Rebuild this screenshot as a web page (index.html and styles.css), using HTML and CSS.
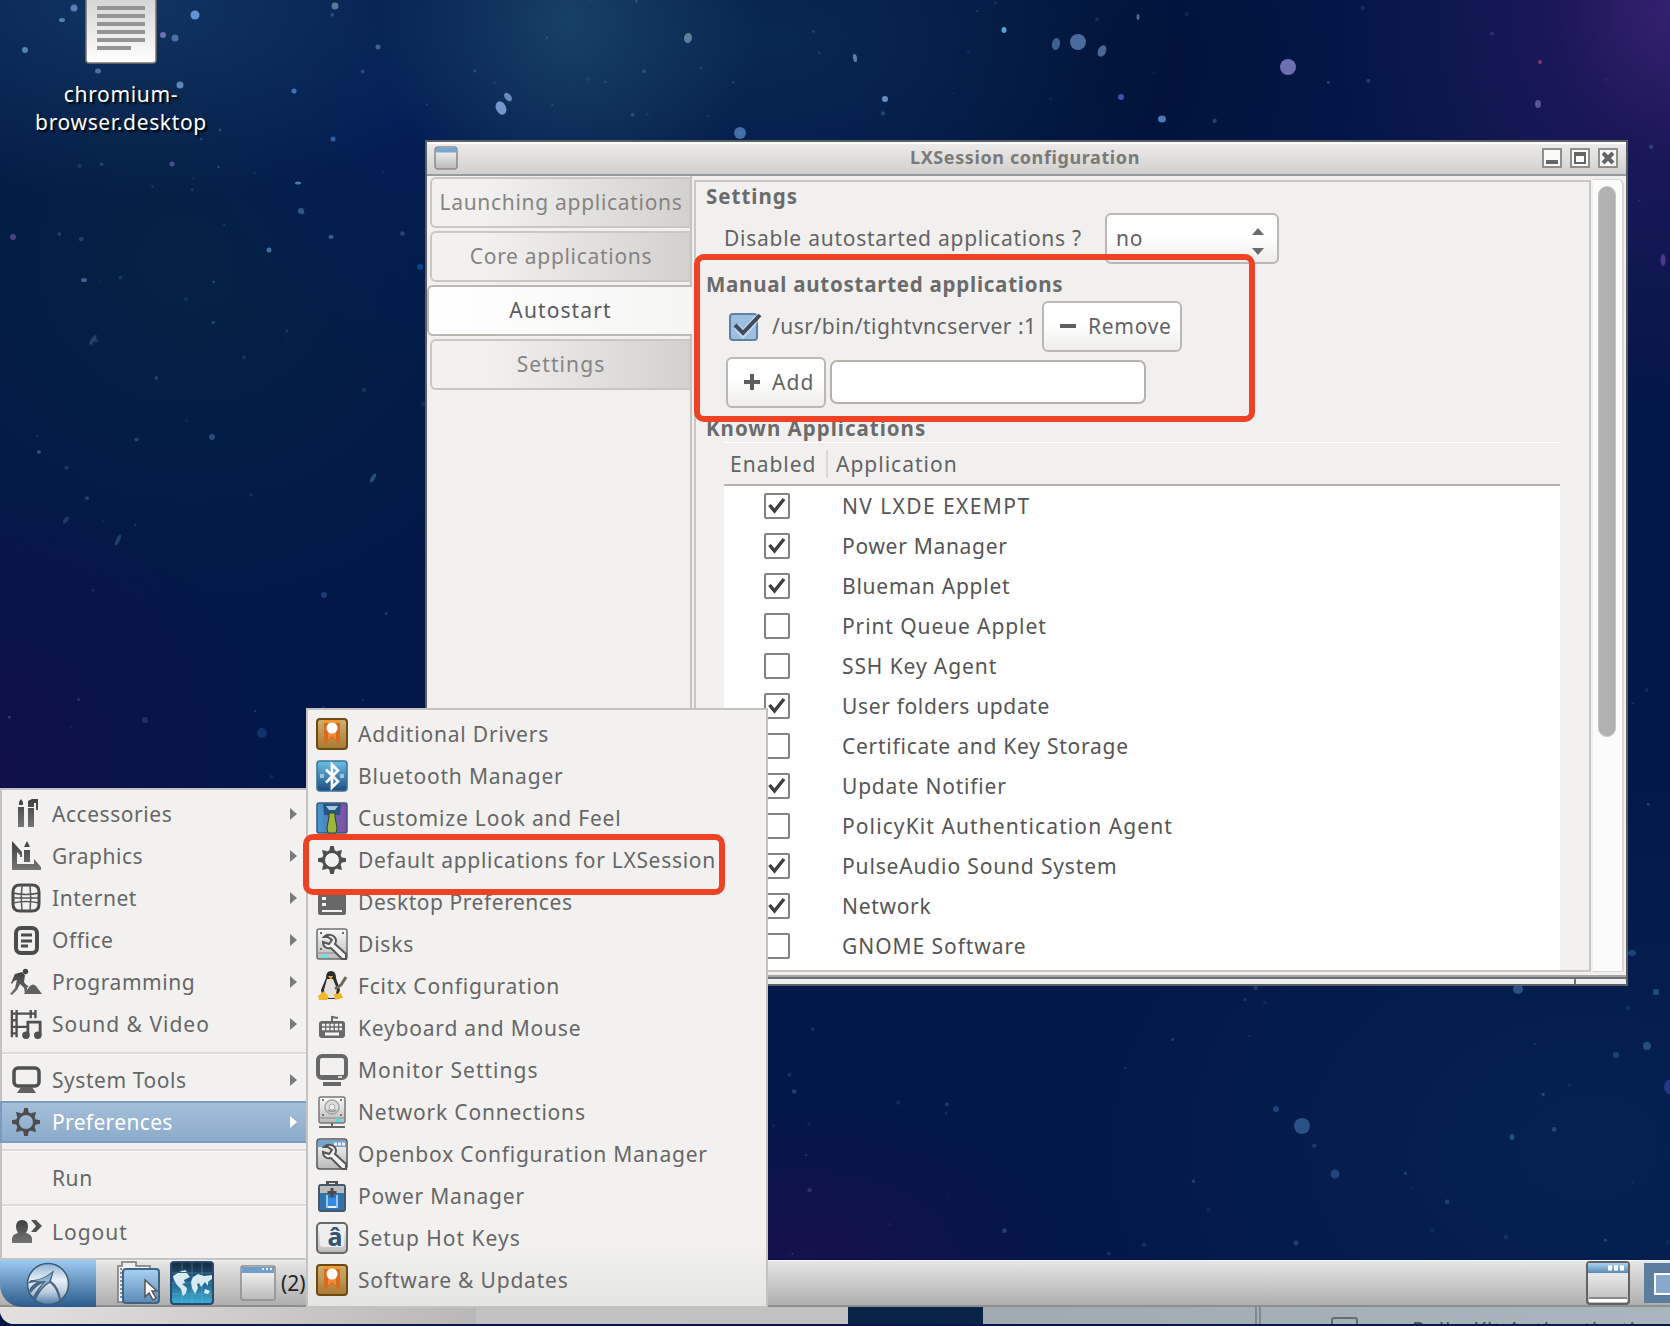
FILE: index.html
```html
<!DOCTYPE html>
<html lang="en">
<head>
<meta charset="utf-8">
<title>LXDE desktop</title>
<link rel="stylesheet" href="styles.css">
</head>
<body>
<svg width="0" height="0" class="defs" aria-hidden="true">
  <defs>
    <linearGradient id="dk" x1="0" y1="0" x2="0" y2="1"><stop offset="0" stop-color="#3f3f3f"/><stop offset="1" stop-color="#757575"/></linearGradient>
    <linearGradient id="gold" x1="0" y1="0" x2="0" y2="1"><stop offset="0" stop-color="#d0b070"/><stop offset="1" stop-color="#a97a33"/></linearGradient>
    <linearGradient id="bt" x1="0" y1="0" x2="0" y2="1"><stop offset="0" stop-color="#6cc0e6"/><stop offset="1" stop-color="#1c4d80"/></linearGradient>
    <linearGradient id="look" x1="0" y1="0" x2="1" y2="0"><stop offset="0" stop-color="#3fa0d4"/><stop offset=".5" stop-color="#5d6fae"/><stop offset="1" stop-color="#8b4aa6"/></linearGradient>
    <linearGradient id="silver" x1="0" y1="0" x2="0" y2="1"><stop offset="0" stop-color="#fbfbfb"/><stop offset="1" stop-color="#b9b9b9"/></linearGradient>
    <linearGradient id="blue" x1="0" y1="0" x2="0" y2="1"><stop offset="0" stop-color="#a9d3f2"/><stop offset="1" stop-color="#5b89b5"/></linearGradient>
    <linearGradient id="paper" x1="0" y1="0" x2="0" y2="1"><stop offset="0" stop-color="#cfcfcf"/><stop offset="1" stop-color="#ffffff"/></linearGradient>
    <linearGradient id="globe" x1="0" y1="0" x2="0" y2="1"><stop offset="0" stop-color="#16263c"/><stop offset=".5" stop-color="#23658e"/><stop offset="1" stop-color="#3fb0d6"/></linearGradient>
    <linearGradient id="orb" x1="0" y1="0" x2="0" y2="1"><stop offset="0" stop-color="#8fb2d4"/><stop offset=".4" stop-color="#e8f0f7"/><stop offset=".7" stop-color="#bccddd"/><stop offset="1" stop-color="#4f7ba8"/></linearGradient>
    <symbol id="gear" viewBox="0 0 32 32"><circle cx="16" cy="16" r="8.500" fill="none" stroke="#4d4d4d" stroke-width="3"/><path d="M14.200 2h3.600l1 5h-5.600zM14.200 30h3.600l1-5h-5.600zM2 14.200v3.600l5 1v-5.600zM30 14.200v3.600l-5 1v-5.600zM6 6l4.500 1 1 2-2.500 2.500-2-1zM26 6l-4.500 1-1 2 2.500 2.500 2-1zM6 26l4.500-1 1-2L9 20.500l-2 1zM26 26l-4.500-1-1-2 2.500-2.500 2 1z" fill="#4d4d4d"/></symbol>
    <symbol id="drivers" viewBox="0 0 32 32"><rect x="1" y="1" width="30" height="30" rx="3" fill="url(#gold)" stroke="#6d4a12" stroke-width="2"/><path d="M8 2h16v24l-8-6-8 6z" fill="#dc6a1e"/><path d="M12 2v20l4-4 4 4V2z" fill="#ee8a38"/><path d="M8 2h16v3H8z" fill="#f09a30"/><circle cx="16" cy="10" r="5.5" fill="#fff"/></symbol>
    <symbol id="wrench" viewBox="0 0 32 32"><path d="M8 9c4-4 11-2 12 3 0 2 0 3-1 4l11 10v5h-4L15 20c-4 1-8-1-8-6l6 2 3-4-4-3z" fill="#f2f2f2" stroke="#555" stroke-width="2"/></symbol>
  </defs>
</svg>

<main class="desktop">
  <svg class="sky" width="1670" height="1326" viewBox="0 0 1670 1326" id="sky" aria-hidden="true"></svg>

  <figure class="launcher">
    <svg width="76" height="66" viewBox="0 0 76 66"><rect x="3" y="-10" width="70" height="73" rx="3" fill="url(#paper)" stroke="#77736e" stroke-width="1.5"/><path d="M14 8h48M14 16h48M14 24h48M14 32h48M14 40h48M14 48h34" stroke="#949494" stroke-width="4"/></svg>
    <figcaption>chromium-<br>browser.desktop</figcaption>
  </figure>

  <section class="window">
    <header class="titlebar">
      <svg class="appicon" width="24" height="24" viewBox="0 0 24 24"><rect x="1" y="1" width="22" height="22" rx="3" fill="url(#silver)" stroke="#8b8b8b" stroke-width="1.5"/><rect x="1.5" y="1.5" width="21" height="5" fill="#7aa6cf"/></svg>
      <h1>LXSession configuration</h1>
      <div class="controls">
        <svg viewBox="0 0 20 20"><rect x="1" y="1" width="18" height="18" fill="#fafafa" stroke="#8f8f8d" stroke-width="2"/><path d="M4 14h12" stroke="#666" stroke-width="4"/></svg>
        <svg viewBox="0 0 20 20"><rect x="1" y="1" width="18" height="18" fill="#fafafa" stroke="#8f8f8d" stroke-width="2"/><path d="M5 6h10v9H5z" fill="none" stroke="#666" stroke-width="2"/><path d="M4 6h12" stroke="#666" stroke-width="4"/></svg>
        <svg viewBox="0 0 20 20"><rect x="1" y="1" width="18" height="18" fill="#fafafa" stroke="#8f8f8d" stroke-width="2"/><path d="M5 5l10 10M15 5L5 15" stroke="#666" stroke-width="4"/><path d="M7 7h6v6H7z" fill="#666"/></svg>
      </div>
    </header>
    <div class="body">
      <nav class="tabs">
        <div class="tab">Launching applications</div>
        <div class="tab">Core applications</div>
        <div class="tab active">Autostart</div>
        <div class="tab short">Settings</div>
      </nav>
      <div class="panel">
        <h2 class="short">Settings</h2>
        <div class="row disable"><span class="q">Disable autostarted applications ?</span><div class="select"><span>no</span><svg width="12" height="27" viewBox="0 0 12 27"><path d="M0 7l6-7 6 7zM0 20h12l-6 7z" fill="#6b6b6b"/></svg></div></div>
        <h2 class="h-man">Manual autostarted applications</h2>
        <div class="row manual">
          <svg width="33" height="30" viewBox="0 0 33 30"><rect x="1" y="3" width="27" height="26" rx="3" fill="#9dbfdf" stroke="#5c82a8" stroke-width="2"/><path d="M7 15l7 8L31 4" fill="none" stroke="#fff" stroke-opacity=".4" stroke-width="7"/><path d="M6 14l8 8L31 4" fill="none" stroke="#3e4b5b" stroke-width="4"/></svg>
          <span class="path">/usr/bin/tightvncserver :1</span>
          <div class="button rem"><svg width="18" height="18" viewBox="0 0 18 18"><path d="M1 9h16" stroke="#5e5e5e" stroke-width="4"/></svg><span>Remove</span></div>
        </div>
        <div class="row addrow">
          <div class="button add"><svg width="18" height="18" viewBox="0 0 18 18"><path d="M1 9h16M9 1v16" stroke="#5e5e5e" stroke-width="4"/></svg><span>Add</span></div>
          <div class="entry"></div>
        </div>
        <h2 class="h-known short">Known Applications</h2>
        <div class="table">
          <div class="thead"><span class="c1">Enabled</span><span class="c2">Application</span></div>
          <div class="tbody" id="apps"></div>
        </div>
      </div>
      <div class="scroll"><div class="thumb"></div></div>
    </div>
    <footer class="grip"><i></i></footer>
  </section>

  <footer class="taskbar">
    <div class="start"><svg width="44" height="44" viewBox="0 0 44 44"><circle cx="22" cy="22" r="20.5" fill="url(#orb)" stroke="#39597c" stroke-width="1.5"/><path d="M5 18c7 0 14-2 23-10l-3 11c6 4 9 11 10 19h-2c-2-9-5-14-9-17-5 2-10 8-14 17l-3-3c3-6 6-10 10-14-5 2-9 6-12 10l-2-3c2-4 5-6 8-8-4 0-7 1-10 2z" fill="#49657f"/><path d="M9 18c6 0 12-3 17-7l-3 9c-5 2-9 7-12 13 3-7 6-11 9-14-4 0-8 1-11-1z" fill="#8fb1d0"/></svg></div>
    <svg class="files" width="44" height="44" viewBox="0 0 44 44"><path d="M2 5h4V1h14v4h14v36H2z" fill="#f0f0f0" stroke="#777" stroke-width="1.5"/><path d="M5 7v32" stroke="#888" stroke-width="2" stroke-dasharray="2 2"/><rect x="7" y="8" width="36" height="34" rx="3" fill="url(#blue)" stroke="#3d6389" stroke-width="2"/><path d="M29 19v17l4-4 4 7 3-2-4-7h5z" fill="#fff" stroke="#555" stroke-width="1.5"/></svg>
    <svg class="web" width="44" height="44" viewBox="0 0 44 44"><rect x="1" y="1" width="42" height="42" rx="3" fill="url(#globe)" stroke="#274a73" stroke-width="2"/><path d="M12 2v40M22 2v40M32 2v40M2 12h40M2 22h40M2 33h40" stroke="#74bcd8" stroke-opacity=".4"/><path d="M3 15l5-3 9 0 3 4-6 3 1 3-3 1 5 4-1 5-3 3-2-7-4-4-3-5zM23 16l5-3 6 2 8-1 0 4-4 3v4l-3-4-4 5-2-4-2 1 1 4-3 6-3-6-1-6zM35 28l5 2-2 3-4-1zM9 11l6-2 2 2z" fill="#d6ebf2"/></svg>
    <svg class="win1" width="36" height="36" viewBox="0 0 36 36"><rect x="1" y="1" width="34" height="34" rx="2" fill="url(#silver)" stroke="#8d8d8d" stroke-width="1.5"/><rect x="2" y="2" width="32" height="6" fill="#6f9ecc"/><path d="M22 4h11" stroke="#eef" stroke-width="2" stroke-dasharray="2 2"/></svg>
    <span class="count">(2)</span>
    <svg class="win2" width="44" height="44" viewBox="0 0 44 44"><rect x="1" y="1" width="42" height="42" rx="3" fill="url(#silver)" stroke="#626262" stroke-width="2"/><rect x="2" y="2" width="40" height="10" fill="url(#blue)"/><path d="M22 7h17" stroke="#fff" stroke-width="5" stroke-dasharray="4 2"/><path d="M3 37h38" stroke="#888" stroke-width="2"/><path d="M3 39.500h38" stroke="#fff" stroke-width="3"/></svg>
    <div class="pager"><i></i></div>
  </footer>
  <div class="under"><div class="u1"></div><div class="u2"></div><div class="u3"></div><div class="u4"><i class="bar"></i><i class="box"></i><span>PolicyKit Authentication Agent</span></div></div>

  <nav class="menu main">
    <div class="item arr"><svg class="ic" viewBox="0 0 32 32"><path d="M8 9h6v20H8zM9 4l2-3 2 3v3H9zM18 10h6v19h-6zM18 3l4-2h6v11h-2V5h-2v4h-6z" fill="url(#dk)"/></svg><span>Accessories</span></div>
    <div class="item arr"><svg class="ic" viewBox="0 0 32 32"><path fill-rule="evenodd" d="M2 1l10 11v5h-2v-2l-3-3v12h17v-5l7 8v3H2zM14 10h6v12h-6zM14 7l3-6 3 6z" fill="url(#dk)"/></svg><span>Graphics</span></div>
    <div class="item arr"><svg class="ic" viewBox="0 0 32 32"><path d="M10 3h12q7 0 7 7v12q0 7-7 7H10q-7 0-7-7V10q0-7 7-7z" fill="none" stroke="#4c4c4c" stroke-width="3"/><path d="M12 3q-1.500 13 0 26M20 3q1.500 13 0 26M3 11q13 3 26 0M3 21q13-3 26 0M3 16h26" fill="none" stroke="#555" stroke-width="1.500"/></svg><span>Internet</span></div>
    <div class="item arr"><svg class="ic" viewBox="0 0 32 32"><rect x="6" y="4" width="21" height="25" rx="5" fill="none" stroke="#4c4c4c" stroke-width="4"/><path d="M11 11h11M11 17h11M11 22h7" stroke="#4c4c4c" stroke-width="3"/></svg><span>Office</span></div>
    <div class="item arr"><svg class="ic" viewBox="0 0 32 32"><circle cx="15.500" cy="5.500" r="2.700" fill="#444"/><path d="M5 8l7-2 3 3-1 7 3 5v7h-2l-1-6-4-4-3 6-5 5-2-1 5-6 2-8-3 1-2 3-1-1 3-7z" fill="url(#dk)"/><path d="M7 12l11 9" stroke="#555" stroke-width="1.500"/><path d="M14 28l6-8q3-3 6 0l6 8z" fill="#606060"/></svg><span>Programming</span></div>
    <div class="item arr av"><svg class="ic" viewBox="0 0 34 32"><path d="M2 1v29M7 1v29M2 5h25M2 12h6M2 19h16M2 26h6M22 1v9M27 1v9" fill="none" stroke="#505050" stroke-width="2.5"/><path d="M19 28V14h13v14" fill="none" stroke="#505050" stroke-width="3"/><circle cx="17" cy="28" r="4" fill="#505050"/><circle cx="29.5" cy="28" r="4" fill="#505050"/></svg><span>Sound &amp; Video</span></div>
    <hr>
    <div class="item arr"><svg class="ic" viewBox="0 0 32 32"><rect x="4" y="4" width="25" height="18" rx="4" fill="none" stroke="#505050" stroke-width="3.500"/><path d="M11 23h11l4 6H7z" fill="#606060"/></svg><span>System Tools</span></div>
    <div class="item arr sel"><svg class="ic"><use href="#gear"/></svg><span>Preferences</span></div>
    <hr>
    <div class="item run"><i class="ic"></i><span>Run</span></div>
    <hr>
    <div class="item logout"><svg class="ic" viewBox="0 0 32 32"><path d="M2 27v-5q1-4 6-5-2-3-2-6 0-7 6-7t6 7q0 3-2 6 5 1 6 5v5z" fill="url(#dk)"/><path d="M21 4h5l6 6-6 6h-5l5-6z" fill="#505050"/></svg><span>Logout</span></div>
  </nav>

  <nav class="menu sub">
    <div class="item"><svg class="ic"><use href="#drivers"/></svg><span>Additional Drivers</span></div>
    <div class="item"><svg class="ic" viewBox="0 0 32 32"><rect x="1" y="1" width="30" height="30" rx="3" fill="url(#bt)" stroke="#3a7099" stroke-width="1.5"/><path d="M10 9.500l12 12-6 6V4.500l6 6-12 12" fill="none" stroke="#fff" stroke-width="2.700"/><path d="M4 14h4v4H4zM24 14h4v4h-4z" fill="#9cc6df"/></svg><span>Bluetooth Manager</span></div>
    <div class="item"><svg class="ic" viewBox="0 0 32 32"><rect x="1" y="1" width="30" height="30" rx="2" fill="url(#look)" stroke="#37587f" stroke-width="1.5"/><path d="M7 2h18l-1 11h-4l-4-3-4 3H8z" fill="#285684"/><path d="M10 4h12l-3 4h-6z" fill="#a7cae0"/><path d="M13 11h6v4l2 11-1 5h-8l-1-5 2-11z" fill="#9cb83a" stroke="#2b4520"/></svg><span>Customize Look and Feel</span></div>
    <div class="item lx"><svg class="ic"><use href="#gear"/></svg><span>Default applications for LXSession</span></div>
    <div class="item dp"><svg class="ic" viewBox="0 0 32 32"><rect x="2" y="3" width="28" height="26" rx="2" fill="#686868"/><path d="M6 11h4v3H6zM6 17h4v3H6zM6 24h20v2H6z" fill="#f2f2f2"/></svg><span>Desktop Preferences</span></div>
    <div class="item"><svg class="ic" viewBox="0 0 32 32"><rect x="1" y="1" width="30" height="30" rx="2" fill="url(#silver)" stroke="#707070" stroke-width="1.5"/><path d="M2 25h28" stroke="#888"/><use href="#wrench"/><path d="M6 27h5v3H6z" fill="#5fe8e8"/><path d="M4 5h2M26 5h2M4 21h2" stroke="#666" stroke-width="2"/></svg><span>Disks</span></div>
    <div class="item"><svg class="ic" viewBox="0 0 32 32"><path d="M10 8q0-7 5-7t5 7l4 12-3 9H7L5 20z" fill="#2b2b2b"/><path d="M11 9h6l4 10-2 9h-9l-2-8z" fill="#e4e2de"/><path d="M12 6h5l-2 4z" fill="#e8a72c"/><path d="M2 26l6-5 5 6-2 3H3zM18 24l7-1 2 5-8 2z" fill="#f1b72c"/><path d="M19 19l6-4 5-8" fill="none" stroke="#6f675c" stroke-width="3"/></svg><span>Fcitx Configuration</span></div>
    <div class="item"><svg class="ic" viewBox="0 0 32 32"><rect x="3" y="9" width="26" height="17" rx="3" fill="#686868"/><path d="M6 13h20M6 17h20" stroke="#f4f4f4" stroke-width="2.5" stroke-dasharray="3 1.3"/><path d="M9 22h14" stroke="#f4f4f4" stroke-width="3"/><path d="M16 9V5l6 1" fill="none" stroke="#686868" stroke-width="2"/></svg><span>Keyboard and Mouse</span></div>
    <div class="item ms"><svg class="ic" viewBox="0 0 32 32"><rect x="2" y="2" width="28" height="22" rx="4" fill="none" stroke="#686868" stroke-width="4"/><path d="M7 30h18M4 23h24" stroke="#686868" stroke-width="4"/><path d="M22 23h4" stroke="#fff" stroke-width="1.5"/></svg><span>Monitor Settings</span></div>
    <div class="item"><svg class="ic" viewBox="0 0 32 32"><rect x="3" y="1" width="26" height="26" rx="2" fill="url(#silver)" stroke="#777" stroke-width="1.5"/><circle cx="16" cy="11" r="7" fill="#dedede" stroke="#a5a5a5" stroke-width="1.5"/><circle cx="16" cy="11" r="3" fill="#eee" stroke="#aaa"/><path d="M12 14q4 3 8 0" fill="none" stroke="#999" stroke-width="2"/><path d="M6 4h2M24 4h2M6 19h2M24 19h2" stroke="#777" stroke-width="2"/><path d="M4 22h24" stroke="#888"/><path d="M20 24.500h5" stroke="#4fe0df" stroke-width="3"/><path d="M3 31h26M16 27v4" stroke="#666" stroke-width="2"/></svg><span>Network Connections</span></div>
    <div class="item"><svg class="ic" viewBox="0 0 32 32"><rect x="1" y="1" width="30" height="30" rx="3" fill="url(#silver)" stroke="#555" stroke-width="1.5"/><rect x="2" y="2" width="28" height="7" fill="#78a5d0"/><path d="M18 6h11" stroke="#e6f0fa" stroke-width="3" stroke-dasharray="3 1"/><use href="#wrench"/></svg><span>Openbox Configuration Manager</span></div>
    <div class="item"><svg class="ic" viewBox="0 0 32 32"><path d="M10 1h12v5H10z" fill="#555"/><path d="M13 3h6v2h-6z" fill="#eee"/><rect x="3" y="5" width="26" height="26" rx="2" fill="#3173ae" stroke="#44586b" stroke-width="2"/><path d="M4 6h24v7H4z" fill="#bcbcbc"/><path d="M14.500 8h3v3h3v3h-3v3h-3v-3h-3v-3h3z" fill="#4b4b4b"/><path d="M12 18h8v10h-8z" fill="#348ae8"/><path d="M10 15h2v13h-2zM20 15h2v13h-2z" fill="#9bc5e5"/><path d="M12 26h8v2h-8z" fill="#eaf4ff"/></svg><span>Power Manager</span></div>
    <div class="item ms"><svg class="ic" viewBox="0 0 32 32"><rect x="1" y="1" width="30" height="30" rx="4" fill="url(#silver)" stroke="#686868" stroke-width="2"/><rect x="4" y="2" width="24" height="23" rx="3" fill="#eceef0"/><text x="11.500" y="24" class="key">â</text></svg><span>Setup Hot Keys</span></div>
    <div class="item"><svg class="ic"><use href="#drivers"/></svg><span>Software &amp; Updates</span></div>
  </nav>

  <div class="mark m1"></div>
  <div class="mark m2"></div>
</main>
<script src="desktop.js"></script>
</body>
</html>
```
FILE: styles.css
```css
* { box-sizing: border-box; }
body { margin: 0; background: #000; font-family: "Noto Sans", "Open Sans", sans-serif; font-size: 21px; letter-spacing: .7px; color: #5a5a5a; }
.defs { position: absolute; }
svg { display: block; flex: none; }
h1, h2, figure { margin: 0; }
span, h1, h2 { white-space: nowrap; }

.desktop {
  position: relative; width: 1670px; height: 1326px; overflow: hidden;
  display: flex; flex-direction: column; justify-content: flex-end; padding-bottom: 2px;
  background:
    radial-gradient(ellipse 330px 400px at 1670px 10px, #35206e 0%, rgba(36,24,94,.7) 35%, rgba(20,20,80,0) 100%),
    radial-gradient(ellipse 190px 200px at 570px 20px, rgba(25,68,104,.9), rgba(10,45,85,0)),
    radial-gradient(ellipse 420px 220px at 760px 40px, rgba(9,42,82,.9), rgba(9,42,82,0)),
    radial-gradient(ellipse 380px 200px at 130px 0, rgba(20,60,104,.8), rgba(12,45,85,0)),
    radial-gradient(ellipse 260px 260px at 1110px 60px, rgba(1,18,54,.9), rgba(1,18,54,0)),
    radial-gradient(ellipse 260px 150px at 800px 1260px, rgba(26,15,80,.85), rgba(10,16,76,0)),
    radial-gradient(ellipse 260px 300px at 0 770px, rgba(18,15,74,.85), rgba(8,18,72,0)),
    radial-gradient(ellipse 560px 420px at 1590px 1150px, rgba(5,35,80,.95), rgba(4,28,74,0)),
    radial-gradient(ellipse 240px 260px at 400px 110px, rgba(4,30,90,.8), rgba(4,30,90,0)),
    radial-gradient(ellipse 420px 400px at 190px 260px, rgba(5,34,68,.95), rgba(4,26,70,0)),
    #031748;
}
.sky { position: absolute; inset: 0; }

.launcher { position: absolute; left: 19px; top: 0; width: 204px; display: flex; flex-direction: column; align-items: center; color: #fff; text-align: center; line-height: 28px; text-shadow: 2px 2px 2px #000; }
.launcher figcaption { margin-top: 14px; letter-spacing: .65px; }

/* session window */
.window { position: absolute; left: 425px; top: 140px; width: 1203px; height: 846px; border: 2px solid #5c5f60; background: #f1f0ef; display: flex; flex-direction: column; }
.titlebar { height: 34px; flex: none; border-top: 2px solid #fff; border-bottom: 2px solid #959a9d; background: linear-gradient(#ecebea, #d1d0ce); display: flex; align-items: center; padding: 0 8px 2px 7px; }
.titlebar h1 { flex: 1; text-align: center; font-size: 18px; font-weight: 700; letter-spacing: .6px; color: #7b7a78; padding: 0 0 2px 50px; line-height: 24px; }
.controls { display: flex; gap: 8px; }
.controls svg { width: 20px; height: 20px; }
.body { flex: 1; display: flex; min-height: 0; border-bottom: 2px solid #a7a4a1; }
.tabs { width: 265px; padding: 1px 0 0; border-right: 2px solid #c5c2bf; display: flex; flex-direction: column; gap: 3px; color: #858483; }
.tab { height: 51px; margin-left: 3px; border: 2px solid #c9c7c4; border-right: 0; border-radius: 6px 0 0 6px; background: linear-gradient(90deg, #f2f1f0 20%, #d3d1ce); text-align: center; line-height: 46px; white-space: nowrap; }
.tab.short { letter-spacing: 1.1px; }
.tab.active { margin: 0 -2px 0 0; letter-spacing: 1.1px; border-color: #bbb8b4; background: linear-gradient(90deg, #fff, #f5f5f4); color: #5a5a5a; line-height: 47px; }
.panel { margin: 4px 0 3px 2px; flex: 1; border: 2px solid #c9c7c5; display: flex; flex-direction: column; padding-left: 11px; color: #636363; }
h2 { font-size: 20.500px; font-weight: 700; letter-spacing: .75px; line-height: 28px; color: #6b6b6b; margin-left: -1px; }
h2.short { letter-spacing: 1px; }
.row { display: flex; align-items: center; padding-left: 17px; flex: none; }
.disable { height: 52px; margin-top: 2px; }
.q { width: 381px; letter-spacing: .74px; }
.select, .button { border: 2px solid #bab7b4; border-radius: 6px; background: linear-gradient(#fff 45%, #eeedeb); display: flex; align-items: center; height: 51px; line-height: 40px; }
.select { width: 174px; justify-content: space-between; padding: 0 13px 0 9px; }
.select svg { margin-top: 7px; }
.h-man { margin-top: 6px; }
.manual { height: 52px; margin-top: 2px; padding-left: 22px; }
.path { margin-left: 10px; width: 270px; letter-spacing: .5px; }
.button span { margin-left: 11px; }
.rem { width: 140px; padding-left: 15px; }
.addrow { height: 52px; margin-top: 4px; padding-left: 19px; }
.add { width: 100px; padding-left: 15px; letter-spacing: 1.1px; }
.entry { width: 316px; height: 44px; margin-left: 4px; border: 2px solid #b5b2ae; border-radius: 7px; background: #fff; }
.h-known { margin-top: 6px; }
.table { margin: 0 29px 0 17px; flex: 1; min-height: 0; overflow: hidden; border-top: 1px solid #fff; }
.thead { height: 43px; display: flex; align-items: center; border-bottom: 2px solid #b5b2ae; padding-left: 6px; letter-spacing: 1px; }
.thead .c1 { width: 98px; border-right: 2px solid #dcdad8; line-height: 28px; }
.thead .c2 { padding-left: 8px; }
.tbody { background: #fff; height: 500px; color: #555; }
.app { height: 40px; display: flex; align-items: center; }
.app svg { margin: 0 52px 0 40px; }
.scroll { width: 31px; margin: 3px 2px 3px 2px; border: 2px solid #d9d7d5; border-width: 1px 2px 1px 0; border-radius: 0 6px 0 0; background: #fbfbfb; padding: 6px 0 0 5px; }
.thumb { width: 18px; height: 551px; border-radius: 9px; background: #b1b1b1; border: 1px solid #c4c4c4; }
.grip { height: 7px; flex: none; background: #eceff0; border-top: 2px solid #6e7173; display: flex; justify-content: flex-end; }
.grip i { width: 52px; border-left: 2px solid #6e7173; }

/* menus */
.menu { position: absolute; border: 2px solid #c5c3c1; background: #f2f1f0; color: #666; display: flex; flex-direction: column; }
.main { left: 0; top: 788px; width: 308px; height: 472px; padding-top: 3px; letter-spacing: .55px; }
.sub { left: 306px; top: 708px; width: 462px; height: 600px; padding-top: 3px; background: linear-gradient(#f2f1f0 90%, #e4e4e3); letter-spacing: .8px; }
.item { position: relative; height: 42px; flex: none; display: flex; align-items: center; padding-left: 8px; line-height: 40px; }
.item span { margin-left: 10px; }
.lx { letter-spacing: .7px; }
.dp { letter-spacing: .55px; }
.ms, .av { letter-spacing: 1px; }
.ic { width: 32px; height: 32px; flex: none; }
.arr::after { content: ""; margin-left: auto; margin-right: 9px; border-left: 7px solid #7b7b7b; border-top: 6px solid transparent; border-bottom: 6px solid transparent; }
.item.sel { margin: 0 -2px; padding-left: 10px; background: linear-gradient(#a6c0da, #8aa9c9); box-shadow: inset 0 2px #7a9cc0, inset 0 -2px #7a9cc0, inset 2px 0 #7a9cc0; color: #fff; letter-spacing: .35px; }
.sel.arr::after { border-left-color: #fff; margin-right: 11px; }
.menu hr { width: 100%; margin: 7px 0 4px; border: 0; border-top: 2px solid #dcdbda; border-bottom: 1px solid #fafafa; flex: none; }
.sel + hr { margin: 6px 0 4px; }
.run { height: 43px; }
.run + hr { margin: 5px 0 4px; }
.logout { letter-spacing: 1px; }
.key { font: bold 25px "Noto Sans", sans-serif; letter-spacing: 0; fill: #34536f; }

/* panel */
.taskbar { position: relative; height: 47px; flex: none; display: flex; align-items: center; background: linear-gradient(#e6e6e6, #afafaf); border-top: 1px solid #f5f5f5; border-bottom: 2px solid #8e8e8e; }
.start { width: 96px; height: 47px; margin-top: 1px; display: flex; justify-content: center; align-items: center; background: linear-gradient(#9dcbf2, #2c5a8a); border-radius: 0 0 0 22px; }
.files { margin-left: 20px; }
.web { margin-left: 10px; }
.win1 { margin-left: 26px; }
.count { margin-left: 5px; color: #222; font-size: 21px; letter-spacing: 0; }
.win2 { margin-left: auto; }
.pager { width: 26px; height: 40px; margin-left: 14px; padding: 10px 0 0 10px; background: #5b7d9e; }
.pager i { display: block; width: 30px; height: 22px; border: 2px solid #fff; background: #86a9cc; }
.under { position: relative; height: 17px; flex: none; display: flex; background: #c3c3c3; border-radius: 0 0 0 14px; overflow: hidden; }
.u1 { width: 476px; background: linear-gradient(90deg, #e2e1df, #b9b8b6); }
.u2 { width: 372px; background: #c2c2c2; }
.u3 { width: 135px; background: #0a2447; }
.u4 { flex: 1; background: linear-gradient(90deg, #9fabb1, #aab6bd); display: flex; overflow: hidden; color: #4b5458; line-height: 36px; font-size: 21px; }
.bar { width: 6px; margin-left: 272px; border: solid #7e888d; border-width: 0 2px; flex: none; }
.box { width: 27px; height: 27px; margin: 10px 0 0 70px; border: 2px solid #646d72; border-radius: 3px; flex: none; }
.u4 span { margin: 5px 0 0 54px; }

.mark { position: absolute; border: 6px solid #ee4227; border-radius: 10px; }
.m1 { left: 694px; top: 254px; width: 561px; height: 168px; }
.m2 { left: 303px; top: 834px; width: 422px; height: 61px; }
```
FILE: desktop.js
```js
// name, enabled, tracking in px
const apps = [
  ["NV LXDE EXEMPT", 1, 1.4], ["Power Manager", 1, .7], ["Blueman Applet", 1, .75],
  ["Print Queue Applet", 0, .9], ["SSH Key Agent", 0, .9], ["User folders update", 1, .65],
  ["Certificate and Key Storage", 0, .75], ["Update Notifier", 1, .8],
  ["PolicyKit Authentication Agent", 0, 1.1], ["PulseAudio Sound System", 1, .85],
  ["Network", 1, .7], ["GNOME Software", 0, .95]
];
document.getElementById("apps").innerHTML = apps.map(([name, on, track]) =>
  `<div class="app"><svg width="26" height="26" viewBox="0 0 26 26"><rect x="1" y="1" width="24" height="24" rx="1" fill="#fff" stroke="#85827e" stroke-width="2"/>${on ? '<path d="M5.500 12l5 6L20 6" fill="none" stroke="#3f3f3f" stroke-width="3.500"/>' : ""}</svg><span style="letter-spacing:${track}px">${name}</span></div>`
).join("");

// Star field: x, y, rx, ry, rotation, colour, opacity
const stars = [
  [1078,42,8,8,0,"#6a8fc4",.7],[1056,44,4,6,10,"#6a8fc4",.6],[1102,51,4,6,25,"#7a9ccc",.6],
  [1288,67,8,8,0,"#7f80c4",.85],[740,133,6,6,0,"#5a8ac4",.75],[501,108,5,7,-25,"#8fb0e6",.8],
  [508,97,3,5,-40,"#8fb0e6",.7],[688,38,4,5,10,"#7fa2b8",.7],[1302,1126,8,8,0,"#2f568c",.9],
  [1335,1174,4.500,4.500,0,"#30568f",.7],[1518,989,5,5,0,"#30568f",.9],[195,15,4.500,4.500,0,"#6f9de0",.9],
  [175,38,3.500,3.500,0,"#6a8cc0",.7],[163,35,3,3,0,"#8a7fd0",.8],[74,8,3.500,3.500,0,"#6b92d0",.8],
  [62,20,3,2,0,"#6496c4",.8],[25,50,3,3,0,"#6a9ac4",.8],[98,71,3,2.500,0,"#6a8fc0",.7],
  [180,85,3.500,3.500,0,"#6fa0d8",.8],[294,91,2.500,2.500,0,"#4f86cc",.8],[335,6,3.500,3.500,0,"#7a9ab8",.7],
  [378,47,2.500,2.500,0,"#6a90b0",.6],[333,139,2.500,2.500,0,"#3b70b8",.8],[298,183,3,1.500,0,"#4d86b8",.9],
  [269,250,2.500,2.500,0,"#4a86bc",.8],[301,211,3,3,0,"#44709a",.7],[331,237,2.500,2,0,"#3d7894",.8],
  [84,280,3,2,0,"#4572ac",.8],[13,237,3,3,0,"#6358a0",.7],[172,164,2.500,2.500,0,"#6e5eb0",.7],
  [420,267,3,3,0,"#0d4696",.9],[1162,119,4,3.500,0,"#5f92d8",.8],[1121,97,3,3,0,"#5a5ad0",.8],
  [1004,30,2.500,3,0,"#60b0dc",.9],[885,99,3,3,0,"#7daae0",.8],[855,58,2,4,-10,"#80a2d0",.7],
  [1138,17,1.500,3,0,"#7088c0",.7],[1538,104,3,4,0,"#6a65a0",.8],[1540,62,2,2,0,"#bb5c70",.6],
  [1663,260,2.500,6,0,"#5445a0",.8],[1632,953,4,3,0,"#1f5086",.8],[1656,992,3,3,0,"#2c5d94",.8],
  [1647,1046,4,4,0,"#2c5d84",.8],[1669,1087,5,7,0,"#2d3d96",.8],[1276,1109,3,3,0,"#2b4d84",.8],
  [1512,1137,2.500,3,0,"#2b5d80",.8],[1296,1243,2.500,2.500,0,"#2b4d84",.7],[1616,1055,3,3,0,"#25557c",.7],
  [262,733,5,5,0,"#173871",.8],[145,720,3,3,0,"#234079",.7],[118,540,2,6,25,"#345878",.6],
  [93,340,2,6,35,"#385a80",.6],[212,437,3,3,0,"#34618c",.7],[373,478,2,5,30,"#38688c",.7],
  [324,595,3,3,0,"#234f86",.7],[39,452,2,2,0,"#506fa0",.6],[66,520,2,4,40,"#304f80",.6]
];
let seed = 19;
const rnd = () => (seed = (seed * 16807) % 2147483647) / 2147483647;
for (let i = 0; i < 330; i++) {
  const r = .8 + rnd() * 1.6;
  stars.push([rnd() * 1670, rnd() * 1255, r, r, 0, "#5b8db8", .12 + rnd() * .28]);
}
document.getElementById("sky").innerHTML = stars.map(([x, y, a, b, t, c, o]) =>
  `<ellipse cx="${x}" cy="${y}" rx="${a}" ry="${b}" fill="${c}" opacity="${o}" transform="rotate(${t} ${x} ${y})"/>`
).join("");
```
